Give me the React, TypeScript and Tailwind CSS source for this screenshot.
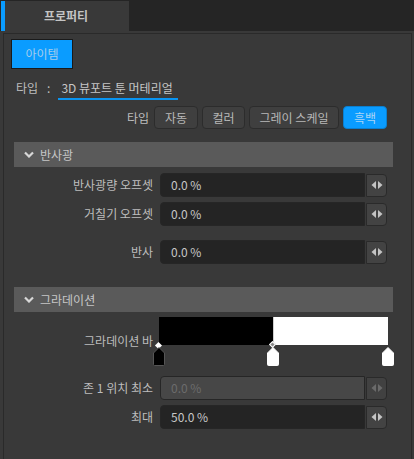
import React from "react";

const font = { fontFamily: '"Noto Sans CJK KR", "Noto Sans", sans-serif' };

function Stepper({ disabled }: { disabled?: boolean }) {
  const c = disabled ? "#6a6a6a" : "#c4c4c4";
  return (
    <div
      className={`ml-[1px] flex h-[23px] w-[21px] items-center justify-center rounded-r-[4px] border border-[#2a2a2a] ${
        disabled ? "bg-[#414141]" : "bg-[#434343]"
      }`}
    >
      <svg width="12" height="8" viewBox="0 0 12 8">
        <path d="M5 0 L0.5 4 L5 8 Z" fill={c} />
        <path d="M7 0 L11.5 4 L7 8 Z" fill={c} />
      </svg>
    </div>
  );
}

function FieldRow({
  label,
  value,
  disabled,
  className = "",
}: {
  label: string;
  value: string;
  disabled?: boolean;
  className?: string;
}) {
  return (
    <div className={`flex items-center ${className}`}>
      <div className="w-[150px] pr-[1px] text-right text-[12px] text-[#bdbdbd]">{label}</div>
      <div
        className={`ml-[6px] flex h-[24px] w-[205px] items-center rounded-l-[4px] border border-[#262626] pl-[10px] text-[12px] ${
          disabled ? "bg-[#474747] text-[#6c6c6c]" : "bg-[#242424] text-[#c8c8c8]"
        }`}
      >
        {value}
      </div>
      <Stepper disabled={disabled} />
    </div>
  );
}

function Section({ title, className = "" }: { title: string; className?: string }) {
  return (
    <div className={`ml-[10px] flex h-[25px] w-[379px] items-center bg-[#5a5a5a] ${className}`}>
      <svg className="ml-[10px]" width="10" height="7" viewBox="0 0 10 7">
        <path d="M1 1.5 L5 5.5 L9 1.5" stroke="#d8d8d8" strokeWidth="2.2" fill="none" />
      </svg>
      <span className="ml-[6px] text-[12px] text-[#c6c6c6]">{title}</span>
    </div>
  );
}

function TypeButton({ label, active, w }: { label: string; active?: boolean; w: string }) {
  return (
    <div
      className={`flex h-[23px] items-center justify-center rounded-[4px] border text-[12px] ${w} ${
        active ? "border-[#0a7fd0] bg-[#0a9cff] text-[#a9d4f5]" : "border-[#2c2c2c] bg-[#3f3f3f] text-[#b8b8b8]"
      }`}
    >
      {label}
    </div>
  );
}

function Thumb({ dark }: { dark?: boolean }) {
  return (
    <svg width="12" height="19" viewBox="0 0 12 19">
      <path
        d="M6 0.5 L11.5 6 L11.5 17.5 Q11.5 18.5 10.5 18.5 L1.5 18.5 Q0.5 18.5 0.5 17.5 L0.5 6 Z"
        fill={dark ? "#000" : "#fff"}
        stroke={dark ? "#555" : "#fff"}
        strokeWidth="1"
      />
    </svg>
  );
}

export default function App() {
  return (
    <div className="h-[459px] w-[414px] overflow-hidden bg-[#393939]" style={font}>
      {/* tab bar */}
      <div className="flex h-[31px] bg-[#252525] pl-[1px] pt-[1px]">
        <div className="flex w-[128px] items-center border-l-[4px] border-[#0a9cff] bg-[#393939]">
          <span className="w-full pr-[2px] text-center text-[12px] font-bold text-[#c4c4c4]">프로퍼티</span>
        </div>
      </div>

      {/* panel */}
      <div className="ml-[3px] mt-[2px] h-[440px] w-[409px] border border-[#2a2a2a] bg-[#393939]">
        <div className="ml-[7px] mt-[5px] flex h-[30px] w-[62px] items-center justify-center border border-[#1a1a1a] bg-[#0a9cff] text-[12px] text-[#a6cdec]">
          아이템
        </div>

        <div className="mt-[10px] flex items-center text-[12px] text-[#bdbdbd]">
          <span className="ml-[12px]">타입</span>
          <span className="ml-[9px]">:</span>
          <span className="relative ml-[8px] px-[3px] text-[#c6c6c6]">
            3D 뷰포트 툰 머테리얼
            <span className="absolute bottom-[-3px] left-0 right-[-2px] h-[2px] bg-[#0a94f0]" />
          </span>
        </div>

        <div className="mt-[9px] flex items-center justify-end gap-[4px] pr-[24px]">
          <span className="mr-[1px] text-[12px] text-[#bdbdbd]">타입</span>
          <TypeButton label="자동" w="w-[44px]" />
          <TypeButton label="컬러" w="w-[43px]" />
          <TypeButton label="그레이 스케일" w="w-[90px]" />
          <TypeButton label="흑백" w="w-[44px]" active />
        </div>

        <Section title="반사광" className="mt-[13px]" />
        <FieldRow label="반사광량 오프셋" value="0.0 %" className="mt-[6px]" />
        <FieldRow label="거칠기 오프셋" value="0.0 %" className="mt-[5px]" />
        <FieldRow label="반사" value="0.0 %" className="mt-[14px]" />

        <Section title="그라데이션" className="mt-[23px]" />

        <div className="mt-[5px] flex items-center">
          <div className="w-[150px] pr-[1px] text-right text-[12px] text-[#bdbdbd]">그라데이션 바</div>
          <div className="relative ml-[5px] h-[48px] w-[229px]">
            <div className="flex h-[28px] w-[229px]">
              <div className="h-full w-[114px] bg-black" />
              <div className="h-full w-[1px] bg-[#cfcfcf]" />
              <div className="h-full flex-1 bg-white" />
            </div>
            <div className="absolute left-[-3px] top-[26px] h-[5px] w-[5px] rotate-45 bg-white" />
            <div className="absolute left-[111px] top-[25px] h-[5px] w-[5px] rotate-45 border border-white bg-[#8a8a8a]" />
            <div className="absolute left-[-6px] top-[30px]">
              <Thumb dark />
            </div>
            <div className="absolute left-[108px] top-[30px]">
              <Thumb />
            </div>
            <div className="absolute left-[223px] top-[30px]">
              <Thumb />
            </div>
          </div>
        </div>

        <FieldRow label="존 1 위치 최소" value="0.0 %" disabled className="mt-[11px]" />
        <FieldRow label="최대" value="50.0 %" className="mt-[5px]" />
      </div>
    </div>
  );
}
